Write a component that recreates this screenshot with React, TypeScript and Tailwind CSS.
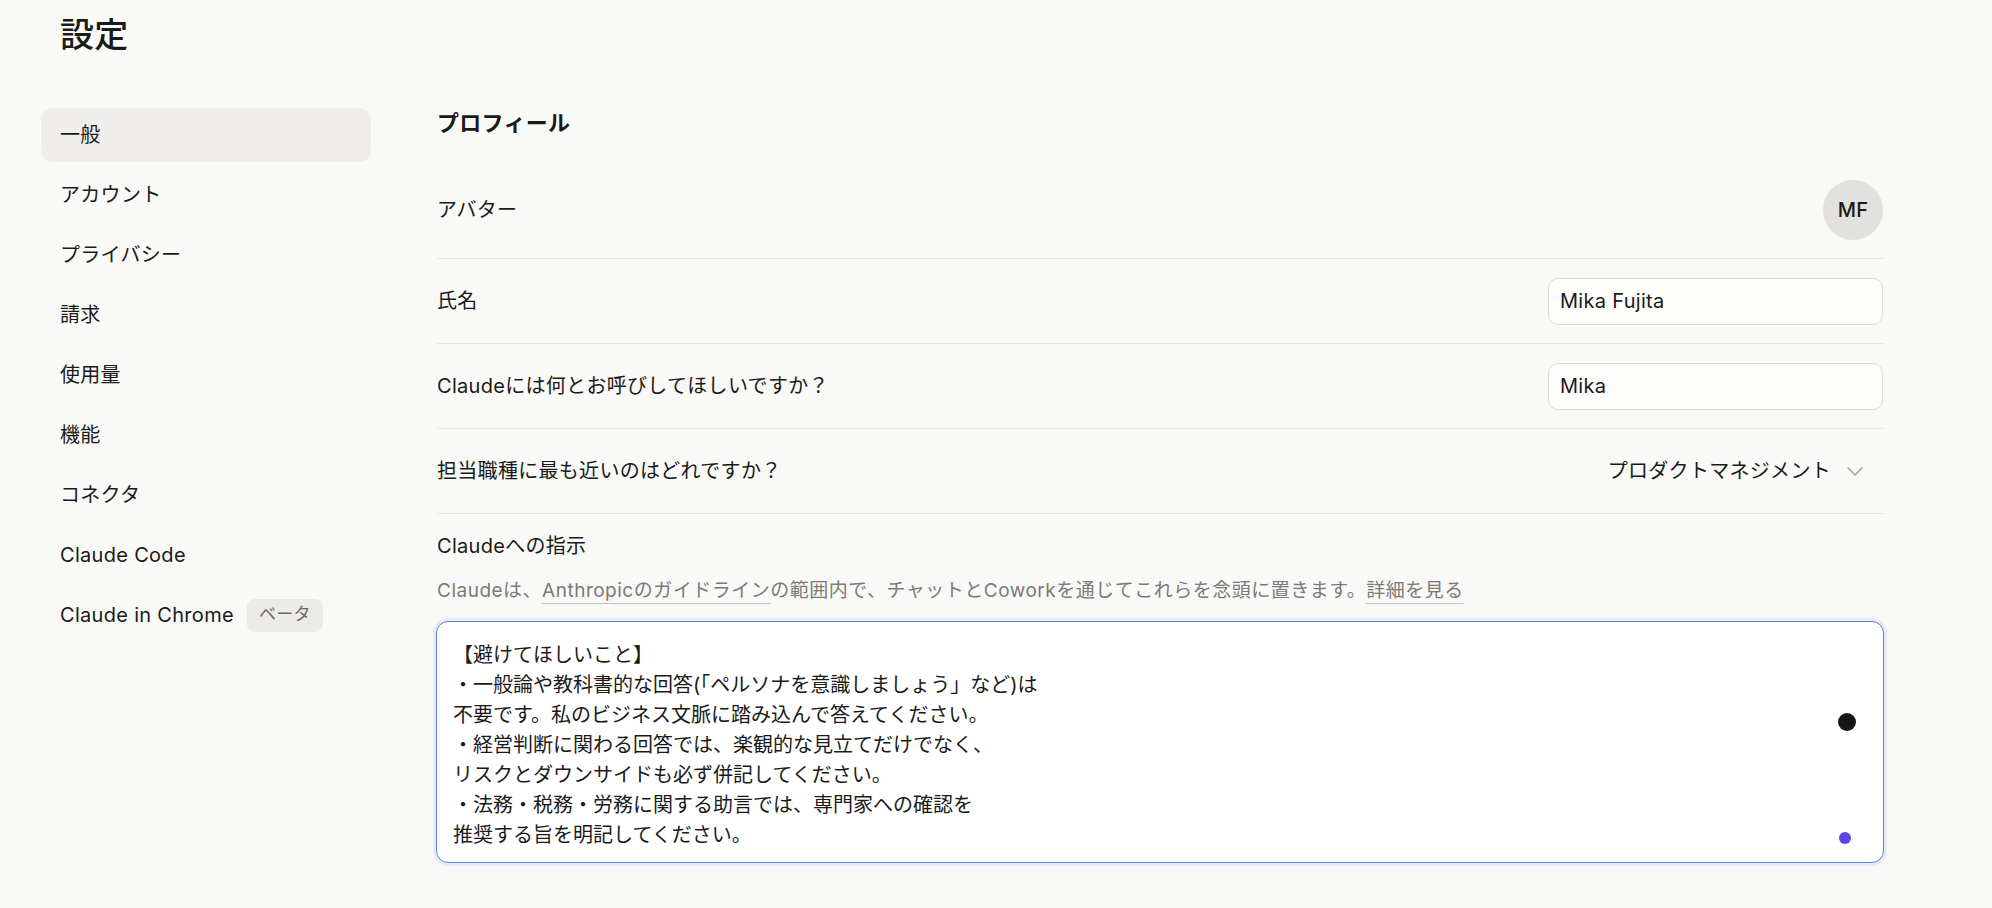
import { useState } from "react";

const navItems = [
    "一般",
    "アカウント",
    "プライバシー",
    "請求",
    "使用量",
    "機能",
    "コネクタ",
    "Claude Code",
    "Claude in Chrome",
];

const instructions = `【避けてほしいこと】
・一般論や教科書的な回答(「ペルソナを意識しましょう」など)は
不要です。私のビジネス文脈に踏み込んで答えてください。
・経営判断に関わる回答では、楽観的な見立てだけでなく、
リスクとダウンサイドも必ず併記してください。
・法務・税務・労務に関する助言では、専門家への確認を
推奨する旨を明記してください。`;

const App = () => {
    const [active, setActive] = useState("一般");
    const [fullName, setFullName] = useState("Mika Fujita");
    const [nickname, setNickname] = useState("Mika");
    const [text, setText] = useState(instructions);

    return (
        <div className="min-h-screen bg-[#f9f9f7] text-[#1a1a19] tracking-[0.3px] font-['Inter','Noto_Sans_CJK_JP',sans-serif]">

            {/* Header */}

            <div className="h-[70px] flex items-center pl-[60px]">
                <h1 className="text-[34px] font-medium leading-none">設定</h1>
            </div>

            <div className="flex pt-[38px]">

                {/* Sidebar */}

                <nav className="ml-[41px] w-[330px] flex flex-col gap-[6px]">
                    {navItems.map((item) => (
                        <button
                            key={item}
                            onClick={() => setActive(item)}
                            className={`h-[54px] px-[19px] flex items-center gap-[13px] rounded-[12px] text-[20px] text-left ${active === item ? "bg-[#efeeeb]" : ""}`}
                        >
                            <span>{item}</span>
                            {item === "Claude in Chrome" && (
                                <span className="h-[33px] px-[12px] flex items-center rounded-[8px] bg-[#ecebe8] text-[17px] text-[#6b6a66]">
                                    ベータ
                                </span>
                            )}
                        </button>
                    ))}
                </nav>

                {/* Main */}

                <main className="ml-[66px] w-[1447px]">
                    <h2 className="h-[30px] leading-[30px] text-[22px] font-bold mb-[23px]">プロフィール</h2>

                    <div className="h-[98px] flex items-center justify-between border-b border-[#e9e7e2] pr-px">
                        <span className="text-[20px]">アバター</span>
                        <div className="w-[60px] h-[60px] rounded-full bg-[#e2e1de] flex items-center justify-center text-[20px] font-medium">
                            MF
                        </div>
                    </div>

                    <div className="h-[85px] flex items-center justify-between border-b border-[#e9e7e2]">
                        <span className="text-[20px]">氏名</span>
                        <input
                            value={fullName}
                            onChange={(e) => setFullName(e.target.value)}
                            className="w-[335px] h-[47px] mr-px px-[11px] rounded-[10px] border border-[#dedcd7] bg-[#fdfdfc] text-[20px] outline-none"
                        />
                    </div>

                    <div className="h-[85px] flex items-center justify-between border-b border-[#e9e7e2]">
                        <span className="text-[20px]">Claudeには何とお呼びしてほしいですか？</span>
                        <input
                            value={nickname}
                            onChange={(e) => setNickname(e.target.value)}
                            className="w-[335px] h-[47px] mr-px px-[11px] rounded-[10px] border border-[#dedcd7] bg-[#fdfdfc] text-[20px] outline-none"
                        />
                    </div>

                    <div className="h-[85px] flex items-center justify-between border-b border-[#e9e7e2]">
                        <span className="text-[20px]">担当職種に最も近いのはどれですか？</span>
                        <button className="flex items-center gap-[16px] pr-[21px] text-[20px]">
                            <span>プロダクトマネジメント</span>
                            <svg width="16" height="9" viewBox="0 0 16 9" fill="none">
                                <path d="M1 1l7 7 7-7" stroke="#9a9995" strokeWidth="1.4" strokeLinecap="round" strokeLinejoin="round" />
                            </svg>
                        </button>
                    </div>

                    {/* Instructions */}

                    <div className="pt-[18px]">
                        <h3 className="text-[20px] leading-[28px]">Claudeへの指示</h3>
                        <p className="mt-[17px] text-[19px] leading-[28px] tracking-[0.5px] text-[#7b7a76]">
                            Claudeは、
                            <a className="underline decoration-[#c4c2bc] underline-offset-[6px]">Anthropicのガイドライン</a>
                            の範囲内で、チャットとCoworkを通じてこれらを念頭に置きます。
                            <a className="underline decoration-[#c4c2bc] underline-offset-[6px]">詳細を見る</a>
                        </p>

                        <div className="relative mt-[16px] w-[1448px] -ml-px">
                            <textarea
                                value={text}
                                onChange={(e) => setText(e.target.value)}
                                className="block w-full h-[242px] resize-none overflow-hidden rounded-[12px] border-[1.5px] border-[#4f83d6] bg-white pl-[16px] pr-[13px] pt-[18px] text-[20px] leading-[30px] tracking-normal text-[#1a1a19] outline-none shadow-[0_0_0_3px_rgba(79,131,214,0.10)]"
                            />
                            <span className="absolute right-[28px] top-[92px] w-[18px] h-[18px] rounded-full bg-[#161616]" />
                            <span className="absolute right-[33px] top-[211px] w-[12px] h-[12px] rounded-full bg-[#5b45e3]" />
                        </div>
                    </div>
                </main>
            </div>
        </div>
    );
};

export default App;
